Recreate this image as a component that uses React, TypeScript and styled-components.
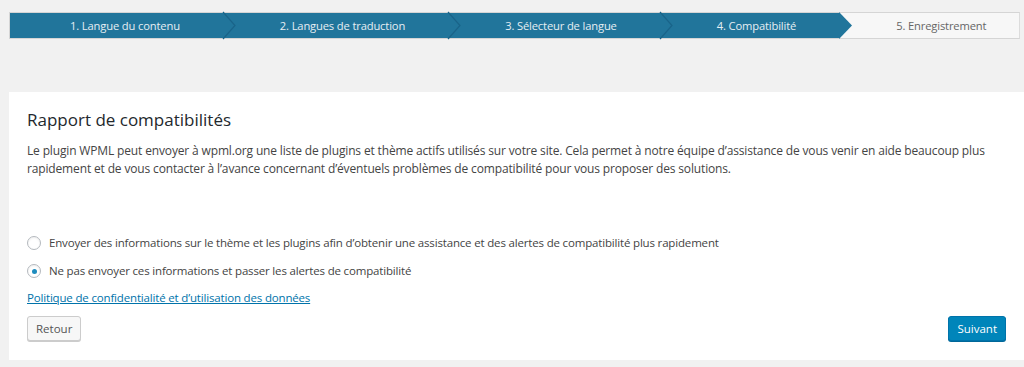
import React from "react";
import styled, { createGlobalStyle } from "styled-components";

const Global = createGlobalStyle`
  html, body { margin: 0; padding: 0; background: #f1f1f1; }
  body { font-family: "Open Sans", "Noto Sans", "Liberation Sans", sans-serif; color: #444; }
  * { box-sizing: border-box; }
`;

const Page = styled.div`
  padding: 12px 0 0 9px;
  display: flex;
  flex-direction: column;
`;

const Steps = styled.ol`
  list-style: none;
  margin: 0 4px 0 0;
  padding: 0;
  display: flex;
  height: 27px;
  border: 1px solid #d5d5d5;
  border-right-color: #dcdcdc;
  background: #f7f7f7;
`;

const Step = styled.li<{ $active: boolean }>`
  position: relative;
  flex: 1 1 auto;
  display: flex;
  align-items: center;
  justify-content: center;
  padding: 0 44px 0 56px;
  font-size: 11.2px;
  letter-spacing: -0.15px;
  white-space: nowrap;
  color: ${(p) => (p.$active ? "#e6eef3" : "#666")};
  background: ${(p) => (p.$active ? "#21759b" : "transparent")};
  &:first-child { padding-left: 60px; }
  &:last-child { padding-right: 38px; }
`;

const Chevron = styled.svg`
  position: absolute;
  top: -1px;
  right: -13px;
  width: 14px;
  height: 27px;
  z-index: 2;
  overflow: visible;
`;

const Card = styled.section`
  margin-top: 53px;
  background: #fff;
  padding: 15px 18px 19px 18px;
  display: flex;
  flex-direction: column;
`;

const Title = styled.h2`
  margin: 0;
  font-size: 17px;
  font-weight: 400;
  color: #23282d;
  line-height: 26px;
`;

const Text = styled.p`
  margin: 9px 0 0 0;
  font-size: 12px;
  letter-spacing: -0.15px;
  line-height: 18px;
  color: #444;
  max-width: 975px;
`;

const Options = styled.div`
  margin-top: 57px;
  display: flex;
  flex-direction: column;
  gap: 12px;
`;

const Option = styled.label`
  display: flex;
  align-items: center;
  gap: 8px;
  font-size: 11.5px;
  letter-spacing: -0.17px;
  color: #444;
  line-height: 16px;
`;

const Radio = styled.span<{ $checked: boolean }>`
  width: 14px;
  height: 14px;
  border-radius: 50%;
  border: 1px solid #b4b9be;
  background: #fff;
  box-shadow: inset 0 1px 2px rgba(0, 0, 0, 0.07);
  display: flex;
  align-items: center;
  justify-content: center;
  flex: none;
  &::after {
    content: "";
    display: ${(p) => (p.$checked ? "block" : "none")};
    width: 5px;
    height: 5px;
    border-radius: 50%;
    background: #1e8cbe;
  }
`;

const Link = styled.a`
  margin-top: 11px;
  font-size: 11.5px;
  letter-spacing: -0.17px;
  color: #0073aa;
  text-decoration: underline;
  line-height: 16px;
  align-self: flex-start;
`;

const Actions = styled.div`
  margin-top: 10px;
  display: flex;
  justify-content: space-between;
`;

const Button = styled.button<{ $primary?: boolean }>`
  height: 25px;
  padding: 0 8px;
  font-family: inherit;
  font-size: 11.5px;
  border-radius: 3px;
  cursor: pointer;
  border: 1px solid ${(p) => (p.$primary ? "#0073aa" : "#ccc")};
  background: ${(p) => (p.$primary ? "#0085ba" : "#f7f7f7")};
  color: ${(p) => (p.$primary ? "#fff" : "#555")};
  box-shadow: ${(p) => (p.$primary ? "0 1px 0 #006799" : "0 1px 0 #ccc")};
`;

const steps = [
  "1. Langue du contenu",
  "2. Langues de traduction",
  "3. Sélecteur de langue",
  "4. Compatibilité",
  "5. Enregistrement",
];
const current = 3;

export default function App() {
  return (
    <>
      <Global />
      <Page>
        <Steps>
          {steps.map((s, i) => {
            const active = i <= current;
            const last = i === steps.length - 1;
            return (
              <Step key={s} $active={active}>
                {s}
                {!last && active && (
                  <Chevron viewBox="0 0 14 27">
                    {i === current ? (
                      <polygon points="0,0 13,13.5 0,27" fill="#21759b" />
                    ) : (
                      <polyline
                        points="0,0 12,13.5 0,27"
                        fill="none"
                        stroke="#1a6489"
                        strokeWidth="1.2"
                      />
                    )}
                  </Chevron>
                )}
              </Step>
            );
          })}
        </Steps>
        <Card>
          <Title>Rapport de compatibilités</Title>
          <Text>
            Le plugin WPML peut envoyer à wpml.org une liste de plugins et thème actifs utilisés sur votre site. Cela
            permet à notre équipe d’assistance de vous venir en aide beaucoup plus rapidement et de vous contacter à
            l’avance concernant d’éventuels problèmes de compatibilité pour vous proposer des solutions.
          </Text>
          <Options>
            <Option>
              <Radio $checked={false} />
              Envoyer des informations sur le thème et les plugins afin d’obtenir une assistance et des alertes de
              compatibilité plus rapidement
            </Option>
            <Option>
              <Radio $checked={true} />
              Ne pas envoyer ces informations et passer les alertes de compatibilité
            </Option>
          </Options>
          <Link href="#">Politique de confidentialité et d’utilisation des données</Link>
          <Actions>
            <Button>Retour</Button>
            <Button $primary>Suivant</Button>
          </Actions>
        </Card>
      </Page>
    </>
  );
}
